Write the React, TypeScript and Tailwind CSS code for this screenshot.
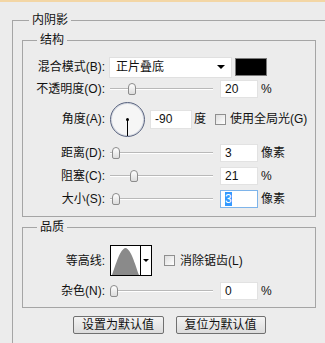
import React from 'react';

const FONT = "font-['Liberation_Sans','Noto_Sans_CJK_SC',sans-serif]";

function Label({ text }: { text: string }) {
  return <div className="w-[82px] shrink-0 text-right leading-[16px]">{text}</div>;
}

function Field({ value, focused }: { value: string; focused?: boolean }) {
  return (
    <div
      className={
        'ml-[7px] flex h-[18px] w-[38px] items-center bg-white pl-[4px] leading-[14px] border ' +
        (focused ? 'border-[#7eb4ea]' : 'border-[#e2e2e2]')
      }
    >
      {focused ? <span className="bg-[#3399ff] text-white">{value}</span> : value}
    </div>
  );
}

function Slider({ pos }: { pos: number }) {
  return (
    <div className="relative ml-[5px] h-[14px] w-[103px] shrink-0">
      <div className="absolute left-0 right-0 top-[6px] h-[2px] border-t border-[#b9b9b9] bg-white" />
      <div
        className="absolute top-[1px] h-[12px] w-[8px] rounded-t-[4px] rounded-b-[2px] border border-[#8c8c8c] bg-gradient-to-b from-white to-[#dcdcdc]"
        style={{ left: pos }}
      />
    </div>
  );
}

function SliderRow({ label, pos, value, unit, focused }: { label: string; pos: number; value: string; unit: string; focused?: boolean }) {
  return (
    <div className="flex h-[23px] items-center">
      <Label text={label} />
      <Slider pos={pos} />
      <Field value={value} focused={focused} />
      <div className="ml-[3px] leading-[16px]">{unit}</div>
    </div>
  );
}

function Check() {
  return <div className="h-[11px] w-[11px] shrink-0 border border-[#8f8f8f] bg-gradient-to-br from-[#dedede] to-white" />;
}

export default function App() {
  return (
    <div className={`h-[343px] w-[325px] overflow-hidden bg-[#ececec] text-[12px] text-[#111] ${FONT}`}>
      <div className="h-[2px] bg-[#f3d6a5]" />
      <fieldset className="ml-[12px] mt-[10px] w-[330px] border border-[#a5a5a5] pb-[60px] pl-[9px]">
        <legend className="ml-[7px] px-[3px] leading-[16px]">内阴影</legend>

        {/* 结构 */}
        <fieldset className="mt-[4px] w-[294px] border border-[#a5a5a5] pb-[6px]">
          <legend className="ml-[14px] px-[3px] leading-[16px]">结构</legend>

          <div className="mt-[8px] flex h-[22px] items-center">
            <Label text="混合模式(B):" />
            <div className="ml-[4px] flex h-[21px] w-[123px] items-center justify-between border border-[#e0e0e0] bg-white pl-[6px] pr-[6px]">
              <span className="leading-[16px]">正片叠底</span>
              <span className="h-0 w-0 border-x-[4px] border-t-[4px] border-x-transparent border-t-black" />
            </div>
            <div className="ml-[3px] h-[18px] w-[32px] border border-[#7a7a7a] bg-black" />
          </div>

          <div className="flex h-[22px] items-center">
            <Label text="不透明度(O):" />
            <Slider pos={18} />
            <Field value="20" />
            <div className="ml-[3px] leading-[16px]">%</div>
          </div>

          <div className="flex h-[38px] items-center">
            <Label text="角度(A):" />
            <div className="relative ml-[5px] h-[35px] w-[35px] shrink-0 rounded-full border-[1.5px] border-[#58627e] bg-[#f6f6f6] shadow-[inset_0_0_0_1px_#d3d7e0]">
              <div className="absolute left-[15px] top-[15px] h-[3px] w-[3px] rounded-full bg-black" />
              <div className="absolute left-[16px] top-[16px] h-[17px] w-[1px] bg-black" />
            </div>
            <div className="ml-[5px] flex h-[19px] w-[42px] items-center border border-[#e2e2e2] bg-white pl-[4px] leading-[14px]">-90</div>
            <div className="ml-[2px] leading-[16px]">度</div>
            <div className="ml-[9px]">
              <Check />
            </div>
            <div className="ml-[4px] leading-[16px]">使用全局光(G)</div>
          </div>

          <div className="mt-[3px]">
            <SliderRow label="距离(D):" pos={2} value="3" unit="像素" />
            <SliderRow label="阻塞(C):" pos={20} value="21" unit="%" />
            <SliderRow label="大小(S):" pos={2} value="3" unit="像素" focused />
          </div>
        </fieldset>

        {/* 品质 */}
        <fieldset className="mt-[2px] w-[294px] border border-[#a5a5a5] pb-[6px]">
          <legend className="ml-[14px] px-[3px] leading-[16px]">品质</legend>

          <div className="mt-[9px] flex h-[33px] items-center">
            <Label text="等高线:" />
            <div className="ml-[5px] flex h-[31px] w-[42px] border border-black bg-white">
              <svg width="29" height="29" viewBox="0 0 29 29" className="block">
                <path d="M1 29 C5 18 9 3 14.5 2 C20 3 24 18 28 29 Z" fill="#8a8a8a" />
              </svg>
              <div className="flex w-[11px] items-center justify-center border-l border-black">
                <span className="h-0 w-0 border-x-[3px] border-t-[3px] border-x-transparent border-t-black" />
              </div>
            </div>
            <div className="ml-[12px]">
              <Check />
            </div>
            <div className="ml-[5px] leading-[16px]">消除锯齿(L)</div>
          </div>

          <div className="mt-[4px] flex h-[20px] items-center">
            <Label text="杂色(N):" />
            <Slider pos={0} />
            <Field value="0" />
            <div className="ml-[3px] leading-[16px]">%</div>
          </div>
        </fieldset>

        <div className="mt-[8px] flex w-[294px] justify-center gap-[12px]">
          <button className="h-[18px] w-[91px] rounded-[2px] border border-[#707070] bg-gradient-to-b from-[#f4f4f4] to-[#dcdcdc] leading-[14px]">设置为默认值</button>
          <button className="h-[18px] w-[90px] rounded-[2px] border border-[#707070] bg-gradient-to-b from-[#f4f4f4] to-[#dcdcdc] leading-[14px]">复位为默认值</button>
        </div>
      </fieldset>
    </div>
  );
}
